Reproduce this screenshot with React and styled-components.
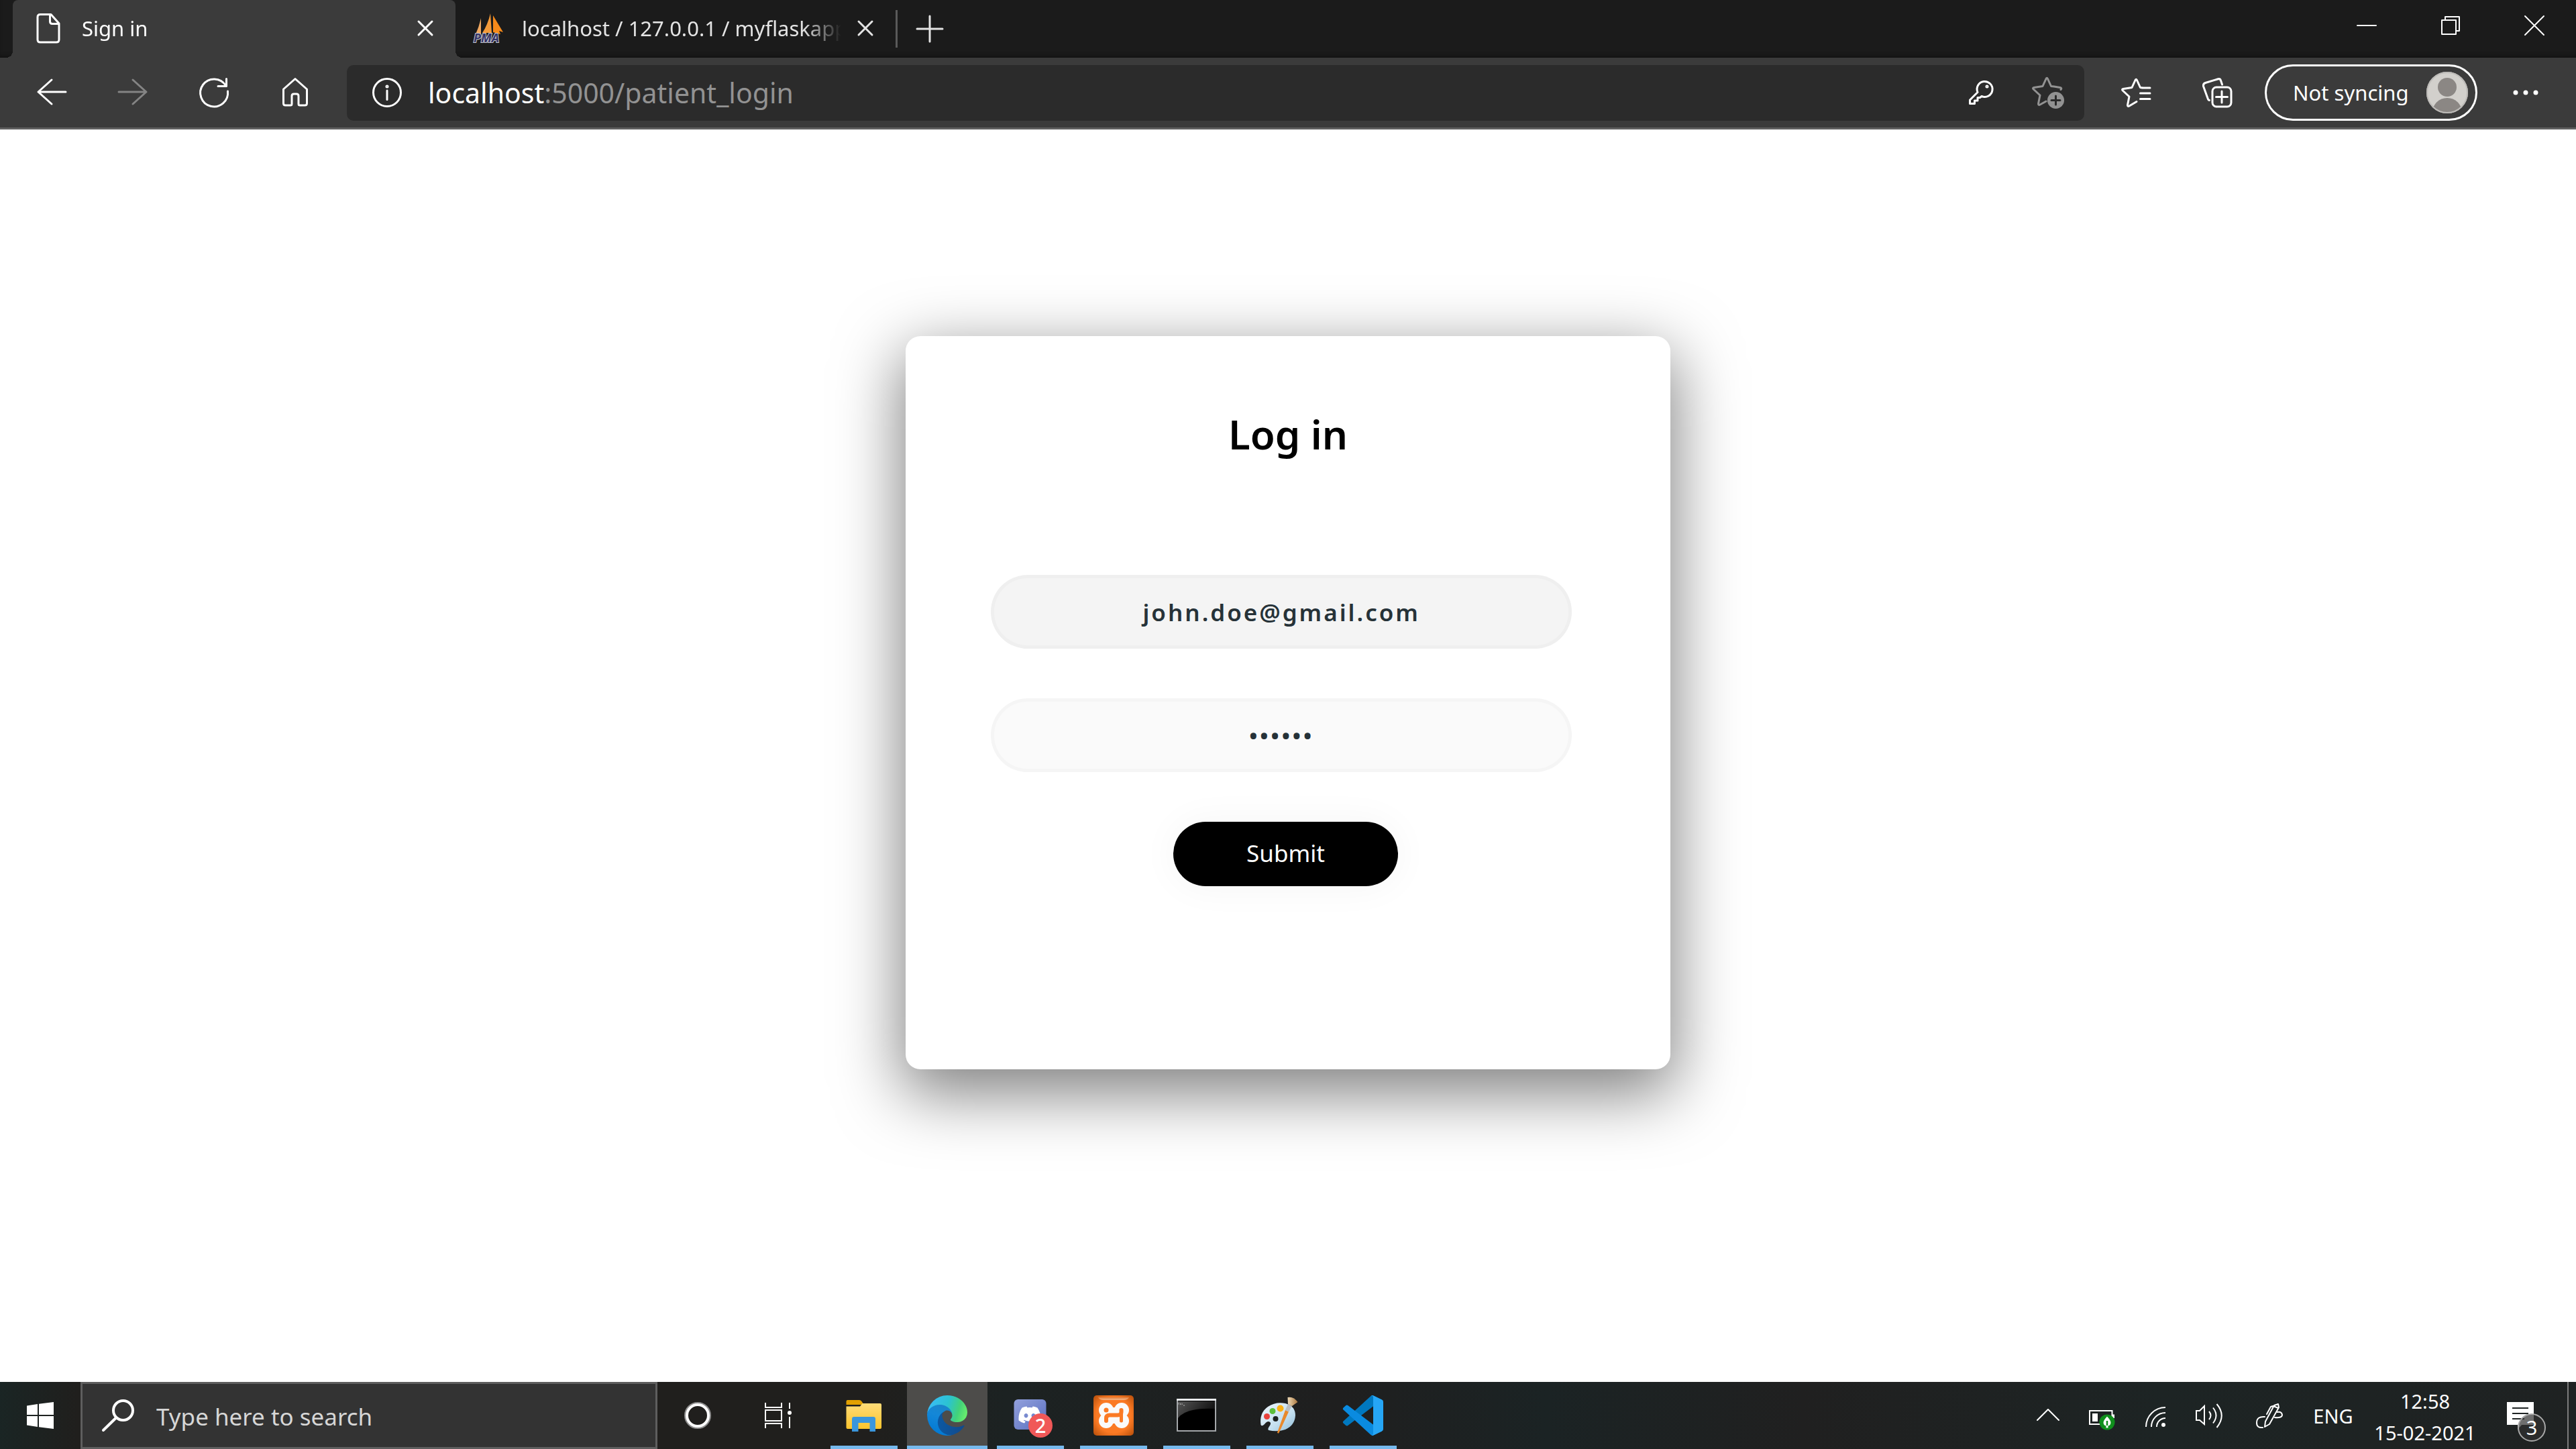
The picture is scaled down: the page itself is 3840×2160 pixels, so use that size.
import React from 'react';
import styled, { createGlobalStyle } from 'styled-components';
import { FaDiscord } from 'react-icons/fa';

const GlobalStyle = createGlobalStyle`
  *, *::before, *::after { box-sizing: border-box; }
  body { margin: 0; background: #fff; }
  body, button, input { font-family: "Noto Sans", "Open Sans", sans-serif; }
  button { margin: 0; padding: 0; border: 0; background: none; color: inherit; cursor: pointer; }
  svg { display: block; flex: none; overflow: visible; }
`;

const Screen = styled.div`
  display: flex;
  flex-direction: column;
  min-height: 100vh;
`;

/* ---------- browser chrome ---------- */

const TabStrip = styled.header`
  display: flex;
  padding-left: 19px;
  background: #1b1b1b;
  box-shadow: inset 0 -6px 6px -4px #111;
  color: #fff;
`;

const Tab = styled.div`
  position: relative;
  display: flex;
  align-items: center;
  width: ${(p) => (p.$active ? 660 : 656)}px;
  height: 86px;
  padding: 0 21px 2px ${(p) => (p.$active ? 31 : 27)}px;
  border-radius: 8px 8px 0 0;
  background: ${(p) => (p.$active ? '#3b3b3b' : 'transparent')};
  color: ${(p) => (p.$active ? '#fff' : '#e4e4e4')};

  &::before,
  &::after {
    content: '';
    display: ${(p) => (p.$active ? 'block' : 'none')};
    position: absolute;
    bottom: 0;
    width: 10px;
    height: 10px;
  }
  &::before {
    right: 100%;
    background: radial-gradient(circle at 0 0, transparent 10px, #3b3b3b 10px);
  }
  &::after {
    left: 100%;
    background: radial-gradient(circle at 100% 0, transparent 10px, #3b3b3b 10px);
  }
`;

const TabTitle = styled.span`
  flex: 1;
  min-width: 0;
  margin: 0 12px 0 28px;
  overflow: hidden;
  white-space: nowrap;
  font-size: 31px;
  line-height: 48px;
  mask-image: linear-gradient(to left, transparent, #000 56px);
`;

const TabClose = styled.button`
  display: grid;
  place-items: center;
  width: 48px;
  height: 48px;
`;

const TabDivider = styled.span`
  align-self: center;
  width: 3px;
  height: 56px;
  background: #5a5a5a;
`;

const NewTab = styled.button`
  display: grid;
  place-items: center;
  width: 96px;
  color: #e4e4e4;
`;

const WindowControls = styled.div`
  display: flex;
  margin-left: auto;
`;

const WindowButton = styled.button`
  display: grid;
  place-items: center;
  width: 125px;
  height: 76px;
`;

const Toolbar = styled.nav`
  display: flex;
  align-items: center;
  height: 107px;
  padding: 0 15px 0 16px;
  border-bottom: 3px solid #606060;
  background: #3b3b3b;
  color: #fff;
`;

const ToolButton = styled.button`
  display: grid;
  place-items: center;
  width: 121px;
  height: 84px;
  color: ${(p) => (p.disabled ? '#848484' : '#fff')};
`;

const AddressBar = styled.div`
  display: flex;
  flex: 1;
  align-items: center;
  height: 83px;
  margin: 0 16px 0 17px;
  padding: 0 30px 0 38px;
  border-radius: 10px;
  background: #2b2b2b;
`;

const AddressButton = styled.button`
  display: grid;
  place-items: center;
  margin-left: ${(p) => (p.$spaced ? 52 : 0)}px;
  color: ${(p) => (p.$muted ? '#929292' : '#fff')};
`;

const Url = styled.div`
  flex: 1;
  margin-left: 39px;
  outline: none;
  white-space: nowrap;
  color: #929292;
  font-size: 41px;
  line-height: 56px;
`;

const UrlHost = styled.span`
  color: #fff;
`;

const Profile = styled.button`
  display: flex;
  align-items: center;
  justify-content: space-between;
  width: 317px;
  height: 84px;
  margin: 0 11px;
  padding: 0 11px 0 39px;
  border: 3px solid #fff;
  border-radius: 42px;
  font-size: 31px;
  line-height: 48px;
`;

/* ---------- page ---------- */

const Page = styled.main`
  flex: 1;
  padding: 308px 0;
  background: #fff;
`;

const Card = styled.form`
  display: flex;
  flex-direction: column;
  align-items: flex-start;
  width: 1140px;
  max-width: 100%;
  margin: 0 auto;
  padding: 102px 0 273px;
  border-radius: 22px;
  background: #fff;
  box-shadow: 0 30px 96px 6px rgba(0, 0, 0, 0.5);
`;

const Heading = styled.h1`
  align-self: center;
  margin: 0 0 166px;
  color: #000;
  font-size: 60px;
  font-weight: 600;
  line-height: 88px;
`;

const Field = styled.input`
  width: 76%;
  height: 110px;
  margin: 0 0 74px 127px;
  padding: 0 55px;
  border: 5px solid rgba(0, 0, 0, 0.02);
  border-radius: 55px;
  outline: none;
  background: ${(p) => (p.$lit ? '#f4f4f4' : '#fafafa')};
  color: #263238;
  font-size: 35px;
  font-weight: 600;
  letter-spacing: 3px;
  text-align: center;
`;

const Submit = styled.button`
  margin-left: 35%;
  width: 335px;
  height: 96px;
  padding-bottom: 3px;
  border-radius: 48px;
  background: #000;
  box-shadow: 0 0 55px 3px rgba(0, 0, 0, 0.04);
  color: #fff;
  font-size: 35px;
`;

/* ---------- taskbar ---------- */

const Taskbar = styled.footer`
  display: flex;
  height: 100px;
  background: linear-gradient(90deg, #1a2524 0, #201f1d 3%, #201f1d 34%, #1c2222 39%, #1f1f1f 52%, #1b2324 60%, #202020 70%, #1d2424 84%, #1f2222 100%);
  color: #fff;
`;

const TaskButton = styled.button`
  position: relative;
  display: grid;
  place-items: center;
  width: 120px;
  height: 100px;
`;

const Search = styled.label`
  display: flex;
  align-items: center;
  width: 860px;
  height: 100px;
  padding: 0 28px 0 29px;
  border: 3px solid #5e5e5e;
  background: #333;
`;

const SearchInput = styled.input`
  flex: 1;
  min-width: 0;
  margin-left: 33px;
  padding: 4px 0 0;
  border: 0;
  outline: 0;
  background: none;
  color: #fff;
  font-size: 35px;
  line-height: 48px;

  &::placeholder {
    color: #d6d6d6;
    opacity: 1;
  }
`;

const Apps = styled.div`
  display: flex;
  gap: 4px;
  margin-left: 8px;
`;

const AppButton = styled(TaskButton)`
  background: ${(p) => (p.$active ? '#4d4c4a' : 'transparent')};

  &::after {
    content: '';
    position: absolute;
    right: ${(p) => (p.$active ? 0 : 10)}px;
    bottom: 0;
    left: ${(p) => (p.$active ? 0 : 10)}px;
    height: 5px;
    background: #76b9ed;
  }
`;

const AppBadge = styled.span`
  position: absolute;
  top: 47px;
  left: 57px;
  width: 36px;
  height: 36px;
  border-radius: 50%;
  background: #f05858;
  font-size: 29px;
  font-weight: 500;
  line-height: 36px;
  text-align: center;
`;

const Tray = styled.div`
  display: flex;
  margin-left: auto;
`;

const TrayButton = styled.button`
  position: relative;
  display: grid;
  place-items: center;
  width: ${(p) => p.$width || 80}px;
  height: 100px;
  font-size: 29px;
`;

const Clock = styled.button`
  display: flex;
  flex-direction: column;
  align-items: center;
  justify-content: center;
  width: 184px;
  padding-top: 4px;
  font-size: 29px;
  line-height: 47px;
`;

const NoticeBadge = styled.span`
  position: absolute;
  top: 47px;
  left: 46px;
  width: 42px;
  height: 42px;
  border: 2px solid #a8a8a8;
  border-radius: 50%;
  background: rgba(48, 48, 48, 0.7);
  font-size: 29px;
  line-height: 38px;
  text-align: center;
`;

const ShowDesktop = styled.button`
  width: 13px;
  border-left: 2px solid #7b7b7b;
`;

/* ---------- icons ---------- */

function Line({ size = 44, width = 3, children }) {
  return (
    <svg width={size} height={size} viewBox={`0 0 ${size} ${size}`} fill="none" stroke="currentColor"
      strokeWidth={width} strokeLinecap="round" strokeLinejoin="round" aria-hidden="true">
      {children}
    </svg>
  );
}

const CrossIcon = () => <Line size={24}><path d="M2 2 22 22M22 2 2 22" /></Line>;

const DocIcon = () => (
  <Line><path d="M10 1.5H26L38 15V39q0 4-4 4H10q-4 0-4-4V5.500q0-4 4-4ZM24.500 2V12q0 3.500 3.500 3.500H38" /></Line>
);

const SailIcon = () => (
  <svg width="44" height="44" viewBox="0 0 44 44" aria-hidden="true">
    <path d="M11 7 11 31H3Q8 20 11 7Z" fill="#f0a860" />
    <path d="M25 0 27 29H13Q21 17 25 0Z" fill="#f39a3a" />
    <path d="M29 3 44 28 38 26 40 31 29 28Z" fill="#f68a1a" />
    <text x="0" y="43" fontSize="18" fontWeight="700" fontStyle="italic" fill="#343466" stroke="#c9c9d2"
      strokeWidth="2" paintOrder="stroke" fontFamily="Noto Sans, sans-serif">PMA</text>
  </svg>
);

const starPath = 'M33 15 28.500 14.500 23.500 3.500Q22.300 1 21 3.500L16 14.500 3 16.500Q.5 17.200 2.300 19L12 28 9.500 40.500Q9.500 43.300 12 42L';

const ICONS = {
  back: <Line><path d="M22 3 2 21 22 39M2 21H43" /></Line>,
  forward: <Line><path d="M22 3 42 21 22 39M42 21H1" /></Line>,
  reload: <Line><path d="M42.500 20A20.500 20.500 0 1 1 39.500 11.500M40.500 1.500V12.500H28" /></Line>,
  home: <Line><path d="M4.500 17 22 1.500 39.500 17V38q0 3-3 3H29q-2 0-2-2V27q0-3-3-3H20q-3 0-3 3V39q0 2-2 2H7.500q-3 0-3-3Z" /></Line>,
  info: (
    <Line>
      <circle cx="22" cy="22" r="20.500" />
      <path d="M22 19V32.500" />
      <circle cx="22" cy="13" r="1" />
    </Line>
  ),
  key: (
    <Line size={48}>
      <path d="M19 23.500 7.500 35V40.500H14.500V36H19V31.500H22.500L25 29.500A11.500 11.500 0 1 0 19 23.500Z" />
      <circle cx="33" cy="15" r="1" />
    </Line>
  ),
  addStar: (
    <Line size={48}>
      <path d={`${starPath}21 37M33 15 42 16.500Q45 17.200 43 19.500`} />
      <circle cx="35.500" cy="35.500" r="12.500" fill="currentColor" stroke="none" />
      <path d="M35.500 29V42M29 35.500H42" stroke="#2b2b2b" />
    </Line>
  ),
  favourites: <Line><path d={`${starPath}23 35.500M31 15H43M28.500 23H43M28.500 31.500H43`} /></Line>,
  collections: (
    <Line>
      <path d="M29.500 10 27.500 4Q26.500 1 23.500 1.800L4.500 7.500Q1 8.500 1.500 12.500L8 30.500Q8.500 33 10.500 33.500" />
      <rect x="15" y="14" width="28" height="29" rx="6" />
      <path d="M29 20V37M20.500 28.500H37.500" />
    </Line>
  ),
  more: (
    <svg width="44" height="44" viewBox="0 0 44 44" fill="currentColor" aria-hidden="true">
      <circle cx="7" cy="22" r="3.500" /><circle cx="22" cy="22" r="3.500" /><circle cx="37" cy="22" r="3.500" />
    </svg>
  ),
};

const Avatar = () => (
  <svg width="62" height="62" viewBox="0 0 62 62" aria-hidden="true">
    <clipPath id="face"><circle cx="31" cy="31" r="31" /></clipPath>
    <g clipPath="url(#face)">
      <rect width="62" height="62" fill="#d2d0cc" />
      <circle cx="31" cy="23" r="14" fill="#8b8784" />
      <ellipse cx="31" cy="60" rx="22" ry="21" fill="#8b8784" />
    </g>
    <circle cx="31" cy="31" r="30" fill="none" stroke="#bdbbb8" strokeWidth="2" />
  </svg>
);

const WindowsLogo = () => (
  <svg width="40" height="40" viewBox="0 0 40 40" fill="#fff" aria-hidden="true">
    <path d="M0 5.500 16 3V19H0ZM18 2.700 40 0V19H18ZM0 21H16V37L0 34.500ZM18 21H40V40L18 37.300Z" />
  </svg>
);

const SearchIcon = () => (
  <Line size={48} width={4}><circle cx="31.500" cy="16.500" r="14.500" /><path d="M21 27.500 2 46" /></Line>
);

const CortanaIcon = () => (
  <svg width="40" height="40" viewBox="0 0 40 40" fill="none" aria-hidden="true">
    <circle cx="20" cy="20" r="18.500" stroke="#8f8f8f" strokeWidth="3" />
    <circle cx="20" cy="20" r="16" stroke="#fff" strokeWidth="4" />
  </svg>
);

const TaskViewIcon = () => (
  <svg width="40" height="40" viewBox="0 0 40 40" fill="none" stroke="#fff" strokeWidth="2" aria-hidden="true">
    <path d="M1 1V8H25V1M1 12H25V28H1ZM1 39V32H25V39M37 1V10M37 22V39" />
    <circle cx="37" cy="16" r="3" fill="#fff" stroke="none" />
  </svg>
);

const FolderIcon = () => (
  <svg width="60" height="60" viewBox="0 0 60 60" aria-hidden="true">
    <defs>
      <linearGradient id="folder" x2="0" y2="1"><stop stopColor="#ffdc78" /><stop offset="1" stopColor="#fcc42c" /></linearGradient>
    </defs>
    <path d="M3.500 9q0-2 2-2H23q2 0 3 1.500L30 14H3.500Z" fill="#e2a000" />
    <path d="M3.500 16.500H24l3.500-4.500H54q2 0 2 2V48q0 2-2 2H5.500q-2 0-2-2Z" fill="url(#folder)" />
    <path d="M12 54V35q0-3 3-3H44q3 0 3 3V54H38.500V41H21.500V54Z" fill="#3a96dd" />
  </svg>
);

const EdgeIcon = () => (
  <svg width="60" height="60" viewBox="4.630 4.920 256 256" aria-hidden="true">
    <defs>
      <linearGradient id="edgeA" x1="0" x2="1"><stop stopColor="#0c59a4" /><stop offset="1" stopColor="#114a8b" /></linearGradient>
      <linearGradient id="edgeB" x1=".6" y1="0" x2=".3" y2="1"><stop stopColor="#1b85c8" /><stop offset=".4" stopColor="#1487d8" /><stop offset="1" stopColor="#0078d4" /></linearGradient>
      <linearGradient id="edgeC" x1="0" y1=".3" x2="1" y2=".5"><stop stopColor="#3bbcf8" /><stop offset=".5" stopColor="#2bc3d2" /><stop offset=".8" stopColor="#42d27a" /><stop offset="1" stopColor="#66eb6e" /></linearGradient>
    </defs>
    <path fill="url(#edgeA)" d="M235.680,195.460a93.730,93.730,0,0,1-10.540,4.710,101.870,101.870,0,0,1-35.900,6.460c-47.320,0-88.540-32.550-88.540-74.320A31.480,31.480,0,0,1,117.130,105c-42.800,1.800-53.800,46.400-53.800,72.530,0,73.880,68.090,81.370,82.760,81.370,7.910,0,19.840-2.300,27-4.560l1.310-.44A128.340,128.340,0,0,0,241,201.100,4,4,0,0,0,235.680,195.460Z" />
    <path fill="url(#edgeB)" d="M110.340,246.340A79.200,79.200,0,0,1,87.600,225,80.720,80.720,0,0,1,117.130,105c3.120-1.470,8.450-4.130,15.540-4a32.350,32.350,0,0,1,25.690,13,31.880,31.880,0,0,1,6.360,18.660c0-.21,24.460-79.600-80-79.600-43.900,0-80,41.660-80,78.210a130.150,130.150,0,0,0,12.110,56,128,128,0,0,0,156.380,67.110,75.550,75.550,0,0,1-62.780-8Z" />
    <path fill="url(#edgeC)" d="M156.940,153.780c-.81,1.050-3.300,2.500-3.300,5.660,0,2.610,1.700,5.120,4.720,7.230,14.380,10,41.490,8.680,41.560,8.680A59.560,59.560,0,0,0,230.190,167a61.380,61.380,0,0,0,30.430-52.880c.26-22.410-8-37.310-11.340-43.910C228.090,28.760,182.350,4.920,132.610,4.920A128,128,0,0,0,4.630,131.160c.48-36.540,36.800-66.050,80-66.050,3.500,0,23.460.34,42,10.070,16.340,8.580,24.900,18.940,30.850,29.210,6.180,10.670,7.280,24.150,7.280,29.520S162,147.220,156.940,153.780Z" />
  </svg>
);

const DiscordIcon = () => (
  <svg width="60" height="60" viewBox="0 0 60 60" aria-hidden="true">
    <defs>
      <linearGradient id="discord" x2="1" y2="1"><stop stopColor="#93a0dc" /><stop offset=".6" stopColor="#7083cc" /><stop offset="1" stopColor="#5a6cb4" /></linearGradient>
    </defs>
    <rect x="5.500" y="6" width="48" height="45" rx="6" fill="url(#discord)" />
    <FaDiscord x="11" y="11" size={36} color="#fff" />
  </svg>
);

const XamppIcon = () => (
  <svg width="60" height="60" viewBox="0 0 60 60" aria-hidden="true">
    <defs>
      <radialGradient id="xampp" r=".72"><stop offset=".6" stopColor="#fb7a24" /><stop offset="1" stopColor="#b04a08" /></radialGradient>
      <linearGradient id="gloss" x2="0" y2="1"><stop stopColor="#e08040" /><stop offset="1" stopColor="#f8b888" /></linearGradient>
    </defs>
    <rect width="60" height="60" rx="5" fill="url(#xampp)" />
    <path d="M7 3H53q-2 4-8 4H15q-6 0-8-4Z" fill="url(#gloss)" />
    <g fill="#fafafa">
      <circle cx="19" cy="22" r="11" /><circle cx="42" cy="22" r="11" />
      <circle cx="19" cy="38" r="11" /><circle cx="42" cy="38" r="11" />
      <rect x="20" y="18" width="21" height="24" />
    </g>
    <g fill="none" stroke="#fb7a24" strokeLinecap="round" strokeLinejoin="round">
      <path d="M19 38V34Q19 29.500 24 29.500H36Q41.500 29.500 41.500 25V22" strokeWidth="6" />
      <path d="M41.500 29V38" strokeWidth="5" />
    </g>
    <circle cx="19" cy="22" r="3.500" fill="#fb7a24" />
  </svg>
);

const ConsoleIcon = () => (
  <svg width="60" height="60" viewBox="0 0 60 60" aria-hidden="true">
    <defs>
      <linearGradient id="shine" x2="1" y2=".4"><stop stopColor="#555" /><stop offset="1" stopColor="#111" /></linearGradient>
    </defs>
    <rect x="1" y="6" width="57" height="47" fill="#000" stroke="#a4a7aa" strokeWidth="2" />
    <path d="M2 9H57V20Q14 18 2 34Z" fill="url(#shine)" />
    <path d="M0 6.500H59" stroke="#e9ebed" strokeWidth="3" />
    <path d="M3 11.500v2M5.500 12v2M8 12v2M10 15h2" stroke="#bbb" strokeWidth="1" />
  </svg>
);

const PaintIcon = () => (
  <svg width="60" height="60" viewBox="0 0 60 60" aria-hidden="true">
    <defs>
      <linearGradient id="palette" x2="1" y2="1"><stop stopColor="#eef7fc" /><stop offset=".6" stopColor="#c5e0f0" /><stop offset="1" stopColor="#8fbcd8" /></linearGradient>
      <linearGradient id="brush" x2="1"><stop stopColor="#f0dcb8" /><stop offset="1" stopColor="#a8743c" /></linearGradient>
    </defs>
    <path d="M1.500 44Q-1 26 12 17 24 9 38 12 53 16 53 30 52 45 38 51 26 55 13 52 11 50 15 45 18 40 13 39 10 39 7 43 3 47 1.500 44Z" fill="url(#palette)" />
    <circle cx="23.500" cy="35" r="4" fill="#1d2121" />
    <circle cx="10.500" cy="31.500" r="4.500" fill="#e8423c" />
    <circle cx="19" cy="23.500" r="4.500" fill="#5cbf3c" />
    <circle cx="30.500" cy="19.500" r="5" fill="#fbb116" />
    <path d="M38 22 43 24.500 29 55Q27.500 58 26 55.500Z" fill="#e8892c" />
    <path d="M38 22 42 13 48 16 43 24.500Z" fill="#b9bec2" />
    <path d="M42 13 41.500 3Q50 1 56.500 10L48 16Z" fill="url(#brush)" />
  </svg>
);

const CodeIcon = () => (
  <svg width="60" height="60" viewBox="0 0 100 100" aria-hidden="true">
    <path fill="#0078bf" d="M96.460 10.800 75.860.88a6.220 6.220 0 0 0-7.100 1.200L1.300 63.600a4.170 4.170 0 0 0 0 6.160l5.500 5a4.160 4.160 0 0 0 5.320.24l81.240-61.630A4.140 4.140 0 0 1 100 16.660v-.24a6.250 6.250 0 0 0-3.540-5.620z" />
    <path fill="#0a8be0" d="M96.460 89.200 75.860 99.120a6.220 6.220 0 0 1-7.100-1.200L1.300 36.400a4.170 4.170 0 0 1 0-6.160l5.500-5a4.160 4.160 0 0 1 5.320-.24l81.240 61.630A4.140 4.140 0 0 0 100 83.340v.24a6.250 6.250 0 0 1-3.540 5.620z" />
    <path fill="#26a6f5" d="M75.860 99.130a6.230 6.230 0 0 1-7.100-1.210c2.300 2.300 6.240.67 6.240-2.590V4.670c0-3.260-3.940-4.890-6.240-2.590A6.230 6.230 0 0 1 75.860.87l20.600 9.900A6.250 6.250 0 0 1 100 16.400v67.200a6.250 6.250 0 0 1-3.540 5.630z" />
  </svg>
);

const BatteryIcon = () => (
  <svg width="38" height="40" viewBox="0 0 38 40" fill="none" aria-hidden="true">
    <path d="M1 13H34.500V33H1Z" stroke="#fff" strokeWidth="2" />
    <path d="M5 17H13V29H5ZM35 18.500H38V24H35Z" fill="#fff" />
    <circle cx="27" cy="30" r="11.500" fill="#0f8f1c" />
    <path d="M27 21.500Q33 28 32.500 31 32 35 28.500 35.500V38.500H25.500V35.500Q22 35 21.500 31 21 28 27 21.500Z" fill="#fff" />
    <path d="M27 28V35" stroke="#0f8f1c" strokeWidth="2.500" />
  </svg>
);

const WifiIcon = () => (
  <svg width="30" height="40" viewBox="0 0 30 40" fill="none" stroke="#fff" strokeWidth="2" aria-hidden="true">
    <path d="M1 37A29 29 0 0 1 30 8M9 37A21 21 0 0 1 30 16M17 37A13 13 0 0 1 30 24" />
    <circle cx="27" cy="34" r="3" fill="#fff" stroke="none" />
  </svg>
);

const VolumeIcon = () => (
  <svg width="40" height="40" viewBox="0 0 40 40" fill="none" stroke="#fff" strokeWidth="2" aria-hidden="true">
    <path d="M1 13H6L13 6V33L6 27H1ZM20 14Q25 20 20 26M26 8.500Q35 20 26 31.500M31.500 3Q46 20 31.500 38" />
  </svg>
);

const PenIcon = () => (
  <Line size={40} width={2}>
    <path d="M13 37 14 29 27 5 33 3 34 8 20 33ZM26 6 33 9M22 7 16 18M22 7 25 6M13 22Q1 21 1 31 1 39 10 38M32 15Q38 14 39 19 39 24 28 23" />
  </Line>
);

const NoticeIcon = () => (
  <svg width="60" height="60" viewBox="0 0 60 60" aria-hidden="true">
    <path d="M0 10H40V44H22L16 51V44H0Z" fill="#fff" />
    <path d="M8 19H32M8 27H32M8 35H26" stroke="#1f2424" strokeWidth="2" />
  </svg>
);

/* ---------- data ---------- */

const TABS = [
  { title: 'Sign in', icon: <DocIcon />, active: true },
  { title: 'localhost / 127.0.0.1 / myflaskapp', icon: <SailIcon /> },
];

const APPS = [
  { name: 'File Explorer', icon: <FolderIcon /> },
  { name: 'Microsoft Edge', icon: <EdgeIcon />, active: true },
  { name: 'Discord', icon: <DiscordIcon />, badge: 2 },
  { name: 'XAMPP Control Panel', icon: <XamppIcon /> },
  { name: 'Command Prompt', icon: <ConsoleIcon /> },
  { name: 'Paint', icon: <PaintIcon /> },
  { name: 'Visual Studio Code', icon: <CodeIcon /> },
];

function Tool({ name, label, disabled }) {
  return <ToolButton type="button" aria-label={label} disabled={disabled}>{ICONS[name]}</ToolButton>;
}

function Browser() {
  return (
    <>
      <TabStrip>
        {TABS.map((tab) => (
          <Tab key={tab.title} $active={tab.active}>
            {tab.icon}
            <TabTitle>{tab.title}</TabTitle>
            <TabClose type="button" aria-label="Close tab"><CrossIcon /></TabClose>
          </Tab>
        ))}
        <TabDivider />
        <NewTab type="button" aria-label="New tab"><Line size={40}><path d="M20 1V39M1 20H39" /></Line></NewTab>
        <WindowControls>
          <WindowButton type="button" aria-label="Minimize"><Line size={28} width={2}><path d="M0 14H28" /></Line></WindowButton>
          <WindowButton type="button" aria-label="Restore">
            <Line size={28} width={2}><path d="M1 6H22V27H1ZM6 6V1H27V22H22" /></Line>
          </WindowButton>
          <WindowButton type="button" aria-label="Close"><Line size={28} width={2}><path d="M0 0 28 28M28 0 0 28" /></Line></WindowButton>
        </WindowControls>
      </TabStrip>
      <Toolbar>
        <Tool name="back" label="Back" />
        <Tool name="forward" label="Forward" disabled />
        <Tool name="reload" label="Refresh" />
        <Tool name="home" label="Home" />
        <AddressBar>
          <AddressButton type="button" aria-label="Site information">{ICONS.info}</AddressButton>
          <Url role="textbox" aria-label="Address" contentEditable suppressContentEditableWarning spellCheck={false}>
            <UrlHost>localhost</UrlHost>:5000/patient_login
          </Url>
          <AddressButton type="button" aria-label="Saved passwords">{ICONS.key}</AddressButton>
          <AddressButton type="button" aria-label="Add to favourites" $spaced $muted>{ICONS.addStar}</AddressButton>
        </AddressBar>
        <Tool name="favourites" label="Favourites" />
        <Tool name="collections" label="Collections" />
        <Profile type="button">Not syncing<Avatar /></Profile>
        <Tool name="more" label="Settings and more" />
      </Toolbar>
    </>
  );
}

function Login() {
  return (
    <Page>
      <Card onSubmit={(event) => event.preventDefault()}>
        <Heading>Log in</Heading>
        <Field $lit type="text" aria-label="Email" defaultValue="john.doe@gmail.com" spellCheck={false} />
        <Field type="password" aria-label="Password" defaultValue="secret" />
        <Submit type="submit">Submit</Submit>
      </Card>
    </Page>
  );
}

function SystemBar() {
  return (
    <Taskbar>
      <TaskButton type="button" aria-label="Start"><WindowsLogo /></TaskButton>
      <Search>
        <SearchIcon />
        <SearchInput type="text" aria-label="Search" placeholder="Type here to search" />
      </Search>
      <TaskButton type="button" aria-label="Cortana"><CortanaIcon /></TaskButton>
      <TaskButton type="button" aria-label="Task view"><TaskViewIcon /></TaskButton>
      <Apps>
        {APPS.map((app) => (
          <AppButton key={app.name} type="button" aria-label={app.name} $active={app.active}>
            {app.icon}
            {app.badge && <AppBadge>{app.badge}</AppBadge>}
          </AppButton>
        ))}
      </Apps>
      <Tray>
        <TrayButton type="button" aria-label="Show hidden icons">
          <Line size={32} width={2}><path d="M0 23 16 7 32 23" /></Line>
        </TrayButton>
        <TrayButton type="button" aria-label="Battery"><BatteryIcon /></TrayButton>
        <TrayButton type="button" aria-label="Network"><WifiIcon /></TrayButton>
        <TrayButton type="button" aria-label="Volume"><VolumeIcon /></TrayButton>
        <TrayButton type="button" aria-label="Ink workspace" $width={100}><PenIcon /></TrayButton>
        <TrayButton type="button" $width={90}>ENG</TrayButton>
        <Clock type="button"><span>12:58</span><span>15-02-2021</span></Clock>
        <TrayButton type="button" aria-label="Notifications" $width={120}>
          <NoticeIcon />
          <NoticeBadge>3</NoticeBadge>
        </TrayButton>
        <ShowDesktop type="button" aria-label="Show desktop" />
      </Tray>
    </Taskbar>
  );
}

export default function App() {
  return (
    <Screen>
      <GlobalStyle />
      <Browser />
      <Login />
      <SystemBar />
    </Screen>
  );
}
